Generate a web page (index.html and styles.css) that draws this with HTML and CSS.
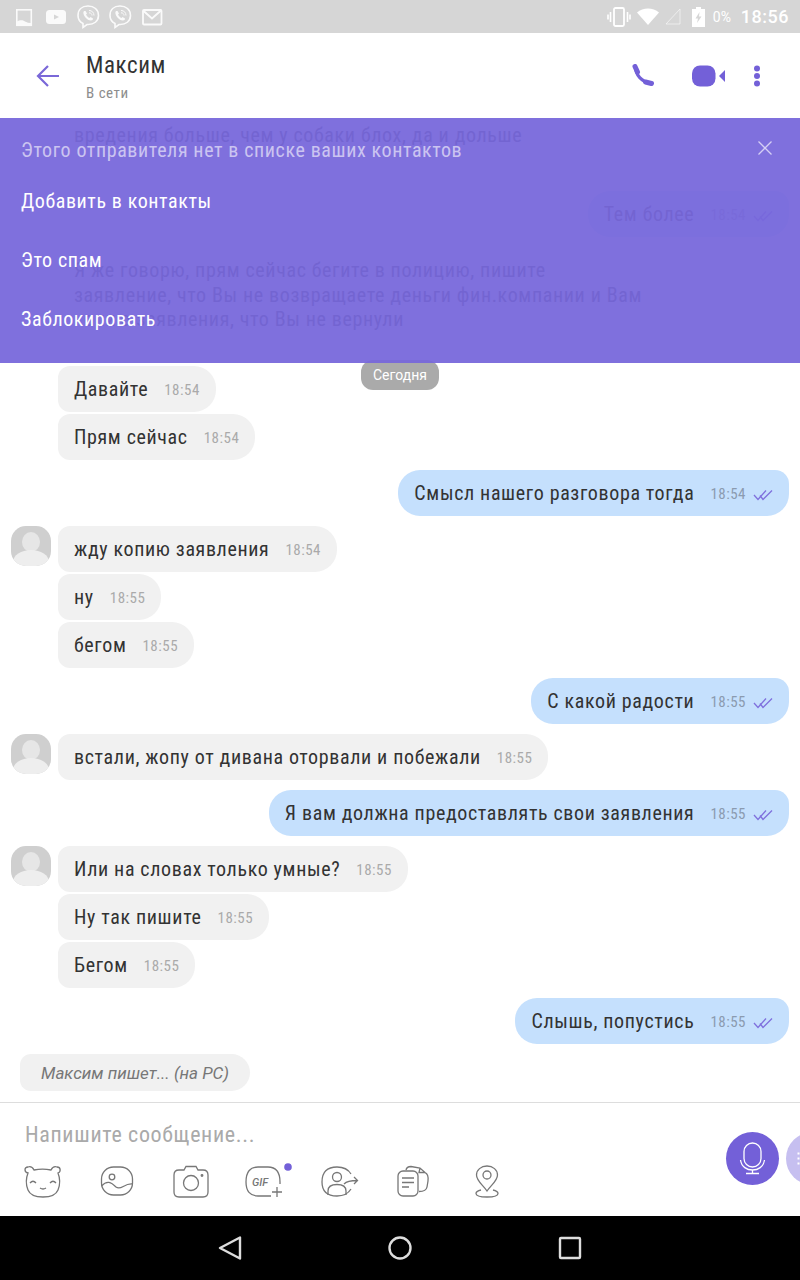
FILE: index.html
```html
<!DOCTYPE html>
<html lang="ru">
<head>
    <meta charset="UTF-8">
    <meta name="viewport" content="width=device-width, initial-scale=1.0">
    <title>Максим</title>
    <link rel="stylesheet" href="styles.css">
</head>
<body>
<div class="screen">
    <div class="statusBar">
        <div class="statusLeft">
            <svg class="statusSlot" viewBox="0 0 32 33"><rect x="8.8" y="9.8" width="14.5" height="15.5" fill="none" stroke="#fff" stroke-width="1.6"/><path d="M9 25V21.500C12 19.500 15 20 17 21.500C19 22.500 21 23 23 23V25Z" fill="#fff"/></svg>
            <svg class="statusSlot" viewBox="0 0 32 33"><rect x="6" y="10" width="20" height="14" rx="3.500" fill="#fff"/><path d="M14 14.500L19 17L14 19.500Z" fill="#d6d6d6"/></svg>
            <svg class="statusSlot" viewBox="0 0 32 33"><path d="M16 6C10 6 6 9.500 6 15.500C6 19.500 8 22 11 23.500V27.500L15 24.500C22 25 26.500 21 26.500 15.500C26.500 9.500 22 6 16 6Z" fill="none" stroke="#fff" stroke-width="1.6"/><path d="M12 11C11 12 11 14 13 17C15 19.500 17 20.500 19 20.500C20.500 20.500 21 19.500 21 18.500L18.500 17L17.500 18C16 17.500 14.500 15.500 14 14.500L15 13.500L13.500 11Z" fill="#fff"/><path d="M17 10.500C20 10.500 22 12.500 22 15.500M17 12.800C19 12.800 20 14 20 15.500" fill="none" stroke="#fff"/></svg>
            <svg class="statusSlot" viewBox="0 0 32 33"><path d="M16 6C10 6 6 9.500 6 15.500C6 19.500 8 22 11 23.500V27.500L15 24.500C22 25 26.500 21 26.500 15.500C26.500 9.500 22 6 16 6Z" fill="none" stroke="#fff" stroke-width="1.6"/><path d="M12 11C11 12 11 14 13 17C15 19.500 17 20.500 19 20.500C20.500 20.500 21 19.500 21 18.500L18.500 17L17.500 18C16 17.500 14.500 15.500 14 14.500L15 13.500L13.500 11Z" fill="#fff"/><path d="M17 10.500C20 10.500 22 12.500 22 15.500M17 12.800C19 12.800 20 14 20 15.500" fill="none" stroke="#fff"/></svg>
            <svg class="statusSlot" viewBox="0 0 32 33"><rect x="7" y="10" width="18.500" height="14.500" rx="1" fill="none" stroke="#fff" stroke-width="1.800"/><path d="M7 10.500L16 18.500L25 10.500" fill="none" stroke="#fff" stroke-width="2"/></svg>
        </div>
        <div class="statusRight">
            <svg class="iconVibrate" viewBox="0 0 24 20"><rect x="7" y="1" width="10" height="18" rx="1.500" fill="none" stroke="#fff" stroke-width="1.800"/><path d="M3.500 5V15M1 7.500V12.500M20.500 5V15M23 7.500V12.500" stroke="#fff" stroke-width="1.600"/></svg>
            <svg class="iconWifi" viewBox="0 0 22 17"><path d="M0 4.500C6 -1 16 -1 22 4.500L11 17Z" fill="#fff"/></svg>
            <svg class="iconSignal" viewBox="0 0 16 17"><path d="M1 16L15 1V16Z" fill="none" stroke="#fff" stroke-opacity=".55" stroke-width="1"/></svg>
            <svg class="iconBattery" viewBox="0 0 13 20"><path d="M4 0H9V2H13V20H0V2H4Z" fill="#fff"/><path d="M7.500 5L3.500 11.500H6L5 16L9.500 9.500H7Z" fill="#d6d6d6"/></svg>
            <span class="statusPercent">0%</span>
            <span class="statusTime">18:56</span>
        </div>
    </div>

    <div class="header">
        <svg class="backIcon" viewBox="0 0 24 24"><path d="M23 12H2M12 2L2 12L12 22" fill="none" stroke="#7a68d8" stroke-width="2.200"/></svg>
        <div class="contact">
            <div class="contactName">Максим</div>
            <div class="contactState">В сети</div>
        </div>
        <svg class="phoneIcon" viewBox="0 0 22 22"><path d="M3.500 3C3.500 11 10 18 18 18.800" fill="none" stroke="#7360d8" stroke-width="3.200"/><path d="M3 2.500L5.500 8M13.500 18L19.500 19.500" stroke="#7360d8" stroke-width="5" stroke-linecap="round"/></svg>
        <svg class="videoIcon" viewBox="0 0 34 22"><rect x="0" y="0.500" width="23.500" height="21" rx="8" fill="#7360d8"/><path d="M33 5V17L27 11Z" fill="#7360d8"/></svg>
        <svg class="dotsIcon" viewBox="0 0 8 22"><circle cx="4" cy="3.500" r="3" fill="#7360d8"/><circle cx="4" cy="11" r="3" fill="#7360d8"/><circle cx="4" cy="18.500" r="3" fill="#7360d8"/></svg>
    </div>

    <div class="chat">
        <div class="message in ghostFirst"><span>вредения больше, чем у собаки блох, да и дольше</span></div>
        <div class="message out ghostOut"><span>Тем более</span><span class="time">18:54</span><svg class="ticks" viewBox="0 0 20 12"><path d="M1 6L5 10.500L13 1.500M7 6.500L10 10.500L19 1.500" fill="none" stroke="#7f70dd" stroke-width="1.300"/></svg></div>
        <div class="message in ghostLong"><span>Я же говорю, прям сейчас бегите в полицию, пишите<br>заявление, что Вы не возвращаете деньги фин.компании и Вам<br>копию заявления, что Вы не вернули</span></div>

        <div class="group first">
            <div class="message in"><span>Давайте</span><span class="time">18:54</span></div>
            <div class="message in"><span>Прям сейчас</span><span class="time">18:54</span></div>
        </div>
        <div class="message out"><span>Смысл нашего разговора тогда</span><span class="time">18:54</span><svg class="ticks" viewBox="0 0 20 12"><path d="M1 6L5 10.500L13 1.500M7 6.500L10 10.500L19 1.500" fill="none" stroke="#7f70dd" stroke-width="1.300"/></svg></div>
        <div class="group">
            <div class="avatar"><div class="avatarHead"></div><div class="avatarBody"></div></div>
            <div class="message in"><span>жду копию заявления</span><span class="time">18:54</span></div>
            <div class="message in"><span>ну</span><span class="time">18:55</span></div>
            <div class="message in"><span>бегом</span><span class="time">18:55</span></div>
        </div>
        <div class="message out"><span>С какой радости</span><span class="time">18:55</span><svg class="ticks" viewBox="0 0 20 12"><path d="M1 6L5 10.500L13 1.500M7 6.500L10 10.500L19 1.500" fill="none" stroke="#7f70dd" stroke-width="1.300"/></svg></div>
        <div class="group">
            <div class="avatar"><div class="avatarHead"></div><div class="avatarBody"></div></div>
            <div class="message in"><span>встали, жопу от дивана оторвали и побежали</span><span class="time">18:55</span></div>
        </div>
        <div class="message out"><span>Я вам должна предоставлять свои заявления</span><span class="time">18:55</span><svg class="ticks" viewBox="0 0 20 12"><path d="M1 6L5 10.500L13 1.500M7 6.500L10 10.500L19 1.500" fill="none" stroke="#7f70dd" stroke-width="1.300"/></svg></div>
        <div class="group">
            <div class="avatar"><div class="avatarHead"></div><div class="avatarBody"></div></div>
            <div class="message in"><span>Или на словах только умные?</span><span class="time">18:55</span></div>
            <div class="message in"><span>Ну так пишите</span><span class="time">18:55</span></div>
            <div class="message in"><span>Бегом</span><span class="time">18:55</span></div>
        </div>
        <div class="message out"><span>Слышь, попустись</span><span class="time">18:55</span><svg class="ticks" viewBox="0 0 20 12"><path d="M1 6L5 10.500L13 1.500M7 6.500L10 10.500L19 1.500" fill="none" stroke="#7f70dd" stroke-width="1.300"/></svg></div>
        <div class="typing">Максим пишет... (на PC)</div>

        <div class="datePill">Сегодня</div>

        <div class="banner">
            <div class="bannerTop">
                <span>Этого отправителя нет в списке ваших контактов</span>
                <svg class="closeIcon" viewBox="0 0 14 14"><path d="M0.500 0.500L13.500 13.500M13.500 0.500L0.500 13.500" stroke="#d5cff5" stroke-width="1.300"/></svg>
            </div>
            <div class="bannerAction">Добавить в контакты</div>
            <div class="bannerAction">Это спам</div>
            <div class="bannerAction">Заблокировать</div>
        </div>
    </div>

    <div class="composer">
        <div class="composerMain">
            <div class="placeholder">Напишите сообщение...</div>
            <div class="tools">
                <svg class="tool" viewBox="0 0 52 40"><path d="M11 12C7 11 7 6 11 6C14 5 16 7 17 9C22 8 29 8 34 9C35 7 37 5 40 6C44 6 44 11 41 12C43 17 43 24 41 29C39 34 33 36 26 36C19 36 13 34 11 29C9 24 9 17 11 12Z"/><path d="M13 22Q16 18.500 19 22M33 22Q36 18.500 39 22M23 27Q26 29 29 27"/></svg>
                <svg class="tool" viewBox="0 0 52 40"><rect x="10.500" y="6" width="31" height="28" rx="12"/><circle cx="21" cy="16" r="2.800"/><path d="M10.500 25C16 19 20 21 25 26C30 30 33 22 41.500 23"/></svg>
                <svg class="tool" viewBox="0 0 52 40"><path d="M14 9H19L21 5.500H31L33 9H38C41 9 43 11 43 14V31C43 34 41 36 38 36H14C11 36 9 34 9 31V14C9 11 11 9 14 9Z"/><circle cx="26" cy="22" r="7.500"/><circle cx="37" cy="14.500" r="0.800"/></svg>
                <svg class="tool" viewBox="0 0 52 40"><path d="M32 35H19C11 35 7 30 7 21C7 11 11 6 19 6H29C37 6 41 11 41 21V23"/><text class="gifLabel" x="13" y="25">GIF</text><path d="M38 26V36M33 31H43"/><circle class="toolDot" cx="49" cy="6" r="3.800"/></svg>
                <svg class="tool" viewBox="0 0 52 40"><path d="M38 13C35 8 31 6 24 6C14 6 9 11 9 21C9 31 14 35 24 35C31 35 35 33 38 28"/><circle cx="24" cy="16" r="4.500"/><path d="M15 34V30C15 25 19 23.500 24 23.500C29 23.500 33 25 33 30V34"/><path d="M31 23C34 20 38 19.500 44 19.500M41 16L44.500 19.500L41 23"/></svg>
                <svg class="tool" viewBox="0 0 52 40"><rect x="11" y="10" width="20" height="25" rx="5"/><path d="M15 17H27M15 21.500H27M15 26H22"/><path d="M19 9C19.500 6.500 22 5.500 24 5.500L33 7L38 11.500C41 13 41.500 16 41 20L40 26C39.500 29 37 30.500 32 30.500M33 7L32 11.500L38 11.500"/></svg>
                <svg class="tool" viewBox="0 0 52 40"><path d="M26 30C22 24 15.500 20 15.500 14C15.500 9 20 5 26 5C32 5 36.500 9 36.500 14C36.500 20 30 24 26 30Z"/><circle cx="26" cy="14" r="4"/><path d="M20 29C16 30 15 31 15 32.500C15 35 20 36 26 36C32 36 37 35 37 32.500C37 31 36 30 32 29"/></svg>
            </div>
        </div>
        <div class="composerButtons">
            <div class="roundButton micButton">
                <svg class="buttonIcon" viewBox="0 0 53 53"><rect x="18" y="11" width="17" height="24" rx="8.500"/><path d="M14.500 28C15.500 35 21 38 26.500 38C32 38 37.500 35 38.500 28M26.500 38V41.500M20 41.500H33"/></svg>
            </div>
            <div class="roundButton moreButton">
                <svg class="buttonIcon" viewBox="0 0 53 53"><path d="M12.500 20.500V22.500M12.500 25.500V27.500M12.500 30.500V32.500" stroke-width="2"/></svg>
            </div>
        </div>
    </div>

    <div class="navBar">
        <svg class="navIcon" viewBox="0 0 24 24"><path d="M22 1.500V22.500L2 12Z"/></svg>
        <svg class="navIcon" viewBox="0 0 24 24"><circle cx="12" cy="12" r="10.500"/></svg>
        <svg class="navIcon" viewBox="0 0 24 24"><rect x="2" y="2" width="20" height="20" rx="1"/></svg>
    </div>
</div>
</body>
</html>
```

FILE: styles.css
```css
html, body {
    margin: 0;
    padding: 0;
}

body {
    font-family: 'Roboto', sans-serif;
    background: #fff;
    color: #333;
}

.screen {
    width: 800px;
    height: 1280px;
    display: flex;
    flex-direction: column;
    overflow: hidden;
}

/* status bar */
.statusBar {
    height: 33px;
    flex: none;
    background-color: #d6d6d6;
    display: flex;
    justify-content: space-between;
    align-items: center;
}

.statusLeft {
    display: flex;
    padding-left: 8px;
    opacity: 0.9;
}

.statusSlot {
    width: 32px;
    height: 33px;
    display: block;
}

.statusRight {
    display: flex;
    align-items: center;
    padding-right: 11px;
    color: #fff;
}

.iconVibrate {
    width: 24px;
    height: 20px;
}

.iconWifi {
    width: 22px;
    height: 17px;
    margin-left: 6px;
}

.iconSignal {
    width: 16px;
    height: 17px;
    margin-left: 6px;
}

.iconBattery {
    width: 13px;
    height: 20px;
    margin-left: 11px;
}

.statusPercent {
    font-size: 14px;
    margin-left: 8px;
    width: 28px;
}

.statusTime {
    font-size: 18px;
    font-weight: 500;
    letter-spacing: 0.5px;
}

/* header */
.header {
    height: 85px;
    flex: none;
    display: flex;
    align-items: center;
    background: #fff;
}

.backIcon {
    width: 24px;
    height: 24px;
    margin-left: 36px;
}

.contact {
    flex: 1;
    margin-left: 26px;
    padding-top: 3px;
    font-stretch: 87%;
}

.contactName {
    font-size: 23px;
    line-height: 26px;
    letter-spacing: 0.6px;
    color: #333;
}

.contactState {
    font-size: 15px;
    line-height: 18px;
    letter-spacing: 0.5px;
    margin-top: 5px;
    color: #8d8d8d;
}

.phoneIcon {
    width: 22px;
    height: 22px;
    margin-bottom: 1px;
}

.videoIcon {
    width: 34px;
    height: 22px;
    margin-left: 38px;
}

.dotsIcon {
    width: 8px;
    height: 22px;
    margin-left: 27px;
    margin-right: 39px;
}

/* chat */
.chat {
    flex: 1;
    position: relative;
    display: flex;
    flex-direction: column;
    justify-content: flex-end;
    overflow: hidden;
    padding-bottom: 11px;
}

.chat > * {
    flex: none;
}

.group {
    position: relative;
    display: flex;
    flex-direction: column;
    align-items: flex-start;
    gap: 2px;
    padding-left: 58px;
    margin-bottom: 10px;
}

.group.first {
    margin-top: 23px;
}

.message {
    display: flex;
    align-items: center;
    height: 46px;
    padding: 0 16px;
    box-sizing: border-box;
    font-size: 20px;
    font-stretch: 87%;
    letter-spacing: 0.64px;
    color: #333;
    white-space: nowrap;
}

.message.in {
    background-color: #f1f1f1;
    border-radius: 12px 22px 22px 12px;
}

.message.out {
    align-self: flex-end;
    margin-right: 11px;
    margin-bottom: 10px;
    background-color: #c5e0fd;
    border-radius: 22px 14px 22px 22px;
}

.time {
    font-size: 15px;
    letter-spacing: 0.5px;
    margin-left: 16px;
    margin-top: 2px;
    color: #aaa;
}

.out .time {
    color: #8b9bb0;
}

.ticks {
    width: 20px;
    height: 12px;
    margin-left: 7px;
    margin-top: 3px;
}

.ghostFirst {
    align-self: flex-start;
    margin-left: 58px;
}

.message.ghostOut {
    margin-top: 33px;
}

.ghostLong {
    align-self: flex-start;
    margin-left: 58px;
    margin-top: 0;
    height: 96px;
    line-height: 24.5px;
}

.avatar {
    position: absolute;
    left: 11px;
    top: 0;
    width: 40px;
    height: 40px;
    border-radius: 15px;
    background-color: #cfcfcf;
    overflow: hidden;
}

.avatarHead {
    width: 18px;
    height: 20px;
    margin: 6px auto 0;
    border-radius: 50%;
    background-color: #e6e6e6;
}

.avatarBody {
    width: 36px;
    height: 24px;
    margin: -2px auto 0;
    border-radius: 50%;
    background-color: #eee;
}

.typing {
    align-self: flex-start;
    margin-left: 20px;
    height: 37px;
    line-height: 38px;
    padding: 0 21px;
    border-radius: 12px 20px 20px 12px;
    background-color: #f1f1f1;
    color: #777;
    font-size: 17px;
    font-style: italic;
}

.datePill {
    position: absolute;
    left: 361px;
    top: 242px;
    width: 78px;
    height: 30px;
    line-height: 30px;
    border-radius: 12px;
    background-color: #aaa;
    color: #fff;
    font-size: 14px;
    text-align: center;
}

/* banner over the chat */
.banner {
    position: absolute;
    left: 0;
    right: 0;
    top: 0;
    height: 245px;
    box-sizing: border-box;
    padding: 21px 28px 0 21px;
    background-color: rgba(119, 103, 219, 0.94);
    color: #fff;
    font-stretch: 87%;
    letter-spacing: 0.6px;
}

.bannerTop {
    display: flex;
    justify-content: space-between;
    align-items: center;
    height: 22px;
    margin-bottom: 11px;
    font-size: 20px;
    color: rgba(255, 255, 255, 0.6);
}

.closeIcon {
    width: 14px;
    height: 14px;
    margin-bottom: 4px;
}

.bannerAction {
    height: 59px;
    line-height: 59px;
    font-size: 20px;
}

/* composer */
.composer {
    height: 114px;
    flex: none;
    display: flex;
    box-sizing: border-box;
    border-top: 1px solid #ddd;
    background: #fff;
    overflow: hidden;
}

.composerMain {
    flex: 1;
}

.placeholder {
    margin: 18px 0 0 25px;
    height: 28px;
    line-height: 28px;
    font-size: 22px;
    font-stretch: 87%;
    letter-spacing: 0.66px;
    color: #aaa;
}

.tools {
    display: flex;
    padding-left: 6px;
    margin-top: 12px;
}

.tool {
    width: 52px;
    height: 40px;
    margin: 0 11px;
    overflow: visible;
    fill: none;
    stroke: #777;
    stroke-width: 1.300;
    display: block;
}

.gifLabel {
    font-family: 'Roboto', sans-serif;
    font-size: 11px;
    font-style: italic;
    font-weight: 500;
    fill: #777;
    stroke: none;
}

.toolDot {
    fill: #7360d8;
    stroke: none;
}

.composerButtons {
    flex: none;
    display: flex;
    gap: 7px;
    margin-top: 29px;
    margin-right: -39px;
}

.roundButton {
    width: 53px;
    height: 53px;
    border-radius: 50%;
}

.micButton {
    background-color: #7360d8;
}

.moreButton {
    background-color: #c6bff0;
}

.buttonIcon {
    width: 53px;
    height: 53px;
    display: block;
    fill: none;
    stroke: #fff;
    stroke-width: 1.300;
}

/* android nav */
.navBar {
    height: 64px;
    flex: none;
    background-color: #000;
    display: flex;
    justify-content: center;
    align-items: center;
    gap: 146px;
}

.navIcon {
    width: 24px;
    height: 24px;
    fill: none;
    stroke: #ddd;
    stroke-width: 2.400;
    stroke-linejoin: round;
}
```
